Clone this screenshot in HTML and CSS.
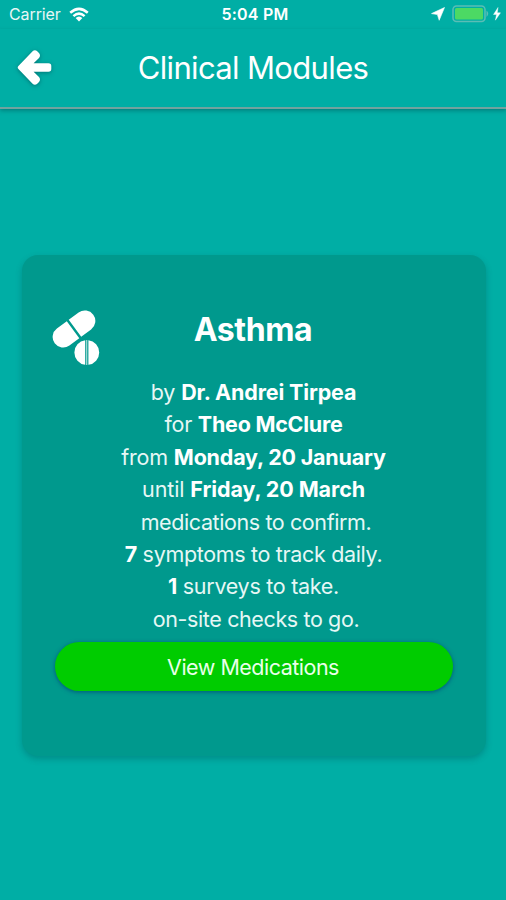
FILE: index.html
```
<!DOCTYPE html>
<html lang="en">
<head>
<meta charset="utf-8">
<title>Clinical Modules</title>
<link rel="stylesheet" href="styles.css">
</head>
<body>
<div class="screen">
  <div class="status">
    <div class="status-left">
      <span class="carrier">Carrier</span>
      <svg class="wifi" width="20" height="15" viewBox="0 0 20 15"><g fill="none" stroke="#fff" stroke-width="2.5"><path d="M1.2 5.8Q10 -2 18.8 5.8"/><path d="M4.4 9.2Q10 4.1 15.6 9.2"/></g><path d="M6.6 11Q10 8 13.4 11L10 14.5Z" fill="#fff"/></svg>
    </div>
    <span class="time">5:04 PM</span>
    <div class="status-right">
      <svg width="14" height="14" viewBox="0 0 14 14"><path d="M13.5 .5L.5 6.6L6.4 7.6L8.2 13.3Z" fill="#fff" stroke="#fff" stroke-width=".6" stroke-linejoin="round"/></svg>
      <svg class="battery" width="38" height="18" viewBox="0 0 38 18"><rect x="1" y="1" width="32" height="15.5" rx="3.5" fill="none" stroke="#5bbdb5" stroke-width="1.5"/><rect x="3" y="3" width="28" height="11.5" rx="1.5" fill="#4cd964"/><path d="M34.5 5.5Q38 8.7 34.5 12Z" fill="#5bbdb5"/></svg>
      <svg width="8" height="14" viewBox="0 0 8 14"><path d="M5 .5L.5 7.5H3.5L2.4 13.2L7.5 5.8H4.3Z" fill="#fff" stroke="#fff" stroke-width=".4"/></svg>
    </div>
  </div>
  <header class="header">
    <svg class="back" width="36" height="38" viewBox="0 0 36 38"><path d="M2.4 18L16.6 3.2Q19 1.3 21.5 3.6L23 5.1Q25 7.5 23 9.9L17.6 15.3H32.5Q35.3 15.3 35.3 18V21Q35.3 23.7 32.5 23.7H17.6L23 29.1Q25 31.5 23 33.9L21.5 35.4Q19 37.7 16.6 35.8L2.4 21Q1 19.5 2.4 18Z" fill="#fff"/></svg>
    <h1 class="title">Clinical Modules</h1>
  </header>
  <main class="card">
    <svg class="pills" width="50" height="56" viewBox="0 0 50 56"><g fill="#fff"><g transform="translate(23 19) rotate(-36.5)"><path d="M-1.2 -10.5H-13.5A10.5 10.5 0 0 0 -13.5 10.5H-1.2ZM1.2 -10.5H13.5A10.5 10.5 0 0 1 13.5 10.5H1.2Z"/></g><path d="M34.2 30.2A12.4 12.4 0 0 0 34.2 54.8ZM37.4 30.2A12.4 12.4 0 0 1 37.4 54.8Z"/><path d="M35.4 30H36.2V55H35.4Z"/></g></svg>
    <h2 class="name">Asthma</h2>
    <div class="details">
      <p class="l1">by <b>Dr. Andrei Tirpea</b></p>
      <p class="l2">for <b>Theo McClure</b></p>
      <p class="l3">from <b>Monday, 20 January</b></p>
      <p class="l4">until <b>Friday, 20 March</b></p>
      <p class="l5">medications to confirm.</p>
      <p class="l6"><b>7</b> symptoms to track daily.</p>
      <p class="l7"><b>1</b> surveys to take.</p>
      <p class="l8">on-site checks to go.</p>
    </div>
    <button class="view">View Medications</button>
  </main>
</div>
</body>
</html>
```
FILE: styles.css
```
* { box-sizing: border-box; }
body { margin: 0; background: #00aea5; color: #fff; font-family: Inter, "Liberation Sans", sans-serif; }
svg { display: block; }
.screen { height: 900px; overflow: hidden; background: #00aea5; }
.status { display: grid; grid-template-columns: 1fr auto 1fr; align-items: center; height: 29px; padding: 0 5px 1px 9px; font-size: 16px; }
.status-left, .status-right { display: flex; align-items: center; }
.status-left { gap: 8px; color: #e6f7f5; }
.carrier { letter-spacing: -.1px; }
.status-right { justify-content: flex-end; gap: 7px; }
.battery { margin-right: -4px; }
.time { font-weight: 600; letter-spacing: .2px; }
.header { display: grid; grid-template-columns: 54px 1fr 54px; align-items: center; height: 80px; padding-bottom: 2px; border-bottom: 2px solid #71a39f; box-shadow: 0 2px 4px rgba(0, 70, 75, .4); }
.back { margin: 0 0 0 16px; filter: drop-shadow(0 1px 2px rgba(0, 60, 70, .5)); }
.title { margin: 0; text-align: center; font-size: 31px; font-weight: 400; letter-spacing: -.65px; white-space: nowrap; }
.card { position: relative; width: 464px; height: 501px; margin: 146px 0 0 22px; padding: 53px 33px 0; border-radius: 16px; background: #00998d; box-shadow: 0 3px 6px rgba(0, 75, 80, .32); }
.pills { position: absolute; left: 29px; top: 55px; }
.name { margin: 0; padding-right: 2px; height: 44px; line-height: 44px; text-align: center; font-size: 32px; font-weight: 700; letter-spacing: -.4px; }
.details { padding: 24px 1px 0 0; font-size: 21.5px; color: #e6f7f5; }
.details p { margin: 0; height: 32.4px; line-height: 32.4px; text-align: center; white-space: nowrap; }
.details b { font-weight: 700; color: #fff; }
.details .l1 { letter-spacing: -.15px; }
.details .l2 { letter-spacing: -.25px; }
.details .l3 { letter-spacing: -.2px; }
.details .l4 { letter-spacing: -.1px; }
.details .l5 { letter-spacing: -.4px; padding-left: 5px; }
.details .l6 { letter-spacing: -.33px; }
.details .l7 { letter-spacing: -.28px; }
.details .l8 { letter-spacing: -.38px; padding-left: 5px; }
.view { display: block; width: 398px; height: 49px; margin: 7px 0 0; padding: 0 2px 0 0; border: 0; border-radius: 25px; background: #00cc00; color: #e9ffe9; font: 400 21.5px Inter, sans-serif; letter-spacing: -.5px; box-shadow: 0 1px 4px rgba(0, 70, 120, .8); }
```
